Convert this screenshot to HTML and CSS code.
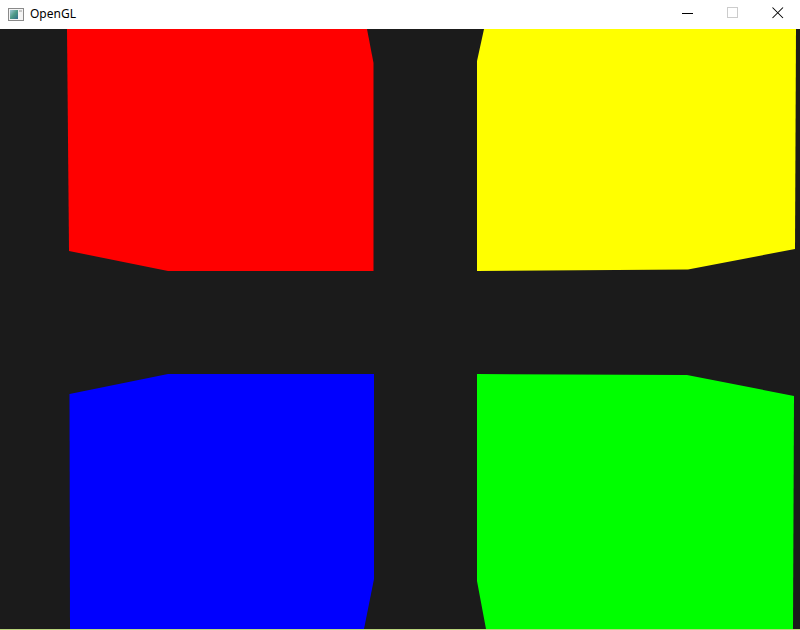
FILE: index.html
```html
<!DOCTYPE html>
<html>
<head>
<meta charset="utf-8">
<title>OpenGL</title>
<link rel="stylesheet" href="styles.css">
</head>
<body>
<div class="window">
  <div class="titlebar">
    <div class="title">
      <svg class="app-icon" width="16" height="13" viewBox="0 0 16 13">
        <defs>
          <linearGradient id="g" x1="0" y1="0" x2="1" y2="1">
            <stop offset="0" stop-color="#9fc7d8"/>
            <stop offset="0.5" stop-color="#4e9a86"/>
            <stop offset="1" stop-color="#2f6d8e"/>
          </linearGradient>
        </defs>
        <rect x="0.5" y="0.5" width="15" height="12" fill="#f4f4f4" stroke="#8a8a8a"/>
        <rect x="2" y="2" width="8" height="9" fill="url(#g)"/>
        <rect x="11" y="2" width="3" height="2" fill="#c8c8c8"/>
      </svg>
      <span class="title-text">OpenGL</span>
    </div>
    <div class="controls">
      <div class="ctl">
        <svg width="12" height="12" viewBox="0 0 12 12"><path d="M0 6.5H11" stroke="#000" stroke-width="1"/></svg>
      </div>
      <div class="ctl">
        <svg width="12" height="12" viewBox="0 0 12 12"><rect x="0.5" y="0.5" width="10" height="10" fill="none" stroke="#cccccc"/></svg>
      </div>
      <div class="ctl">
        <svg width="12" height="12" viewBox="0 0 12 12"><path d="M0.5 0.5L11 11M11 0.5L0.5 11" stroke="#000" stroke-width="1.05"/></svg>
      </div>
    </div>
  </div>
  <svg class="canvas" width="800" height="600" viewBox="0 0 800 600">
    <rect width="800" height="600" fill="#1b1b1b"/>
    <polygon fill="#ff0000" points="67,0 367,0 373.5,34 373.5,242 168,242 69,222"/>
    <polygon fill="#ffff00" points="484,0 796,0 795,220 688,240.5 477,242 477,32"/>
    <polygon fill="#0000ff" points="69.5,365 168,345 374,345 374,550 364,600 70,600"/>
    <polygon fill="#00ff00" points="477,345 687,346 794,367 793,600 486,600 477,552"/>
  </svg>
  <div class="bottom-edge"></div>
</div>
</body>
</html>
```

FILE: styles.css
```css
html, body {
  margin: 0;
  padding: 0;
  background: #ffffff;
}

.window {
  width: 800px;
  height: 630px;
  display: flex;
  flex-direction: column;
  overflow: hidden;
}

.titlebar {
  height: 29px;
  background: #ffffff;
  display: flex;
  align-items: center;
  justify-content: space-between;
  flex: none;
}

.title {
  display: flex;
  align-items: center;
  padding-left: 8px;
  height: 29px;
}

.app-icon {
  display: block;
  margin-top: -1px;
}

.title-text {
  font-family: "Noto Sans", "Open Sans", "DejaVu Sans", sans-serif;
  font-size: 12px;
  color: #000000;
  margin-left: 6px;
  margin-top: -2px;
}

.controls {
  display: flex;
  height: 29px;
}

.ctl {
  width: 45px;
  height: 29px;
  display: flex;
  align-items: center;
  justify-content: center;
}

.ctl svg {
  display: block;
  margin-top: -3px;
}

.canvas {
  display: block;
  flex: none;
}

.bottom-edge {
  height: 1px;
  background: #b9d47c;
  flex: none;
}
```
